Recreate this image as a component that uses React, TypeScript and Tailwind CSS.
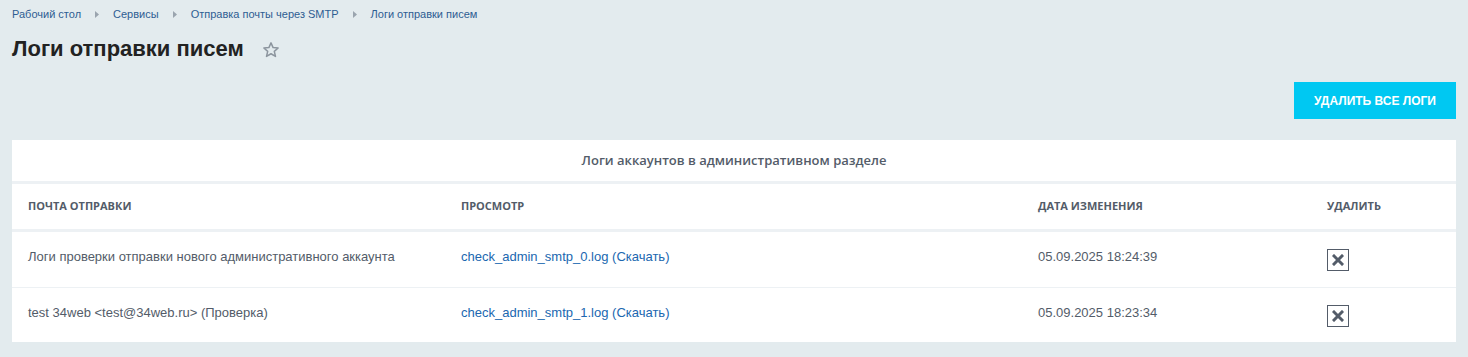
import React from "react";

type Row = {
  mail: string;
  file: string;
  date: string;
};

const rows: Row[] = [
  {
    mail: "Логи проверки отправки нового административного аккаунта",
    file: "check_admin_smtp_0.log",
    date: "05.09.2025 18:24:39",
  },
  {
    mail: "test 34web <test@34web.ru> (Проверка)",
    file: "check_admin_smtp_1.log",
    date: "05.09.2025 18:23:34",
  },
];

const crumbs = ["Рабочий стол", "Сервисы", "Отправка почты через SMTP", "Логи отправки писем"];

const cols = "grid grid-cols-[433px_577px_289px_1fr]";

function Arrow() {
  return (
    <svg width="4" height="7" viewBox="0 0 4 7" className="mx-[14px]">
      <path d="M0 0 L4 3.5 L0 7 Z" fill="#9aa4ae" />
    </svg>
  );
}

function DeleteBox() {
  return (
    <button
      type="button"
      className="mt-[2px] flex h-[22px] w-[22px] items-center justify-center border border-[#535c69] bg-white"
    >
      <svg width="12" height="12" viewBox="0 0 12 12">
        <path d="M2 2 L10 10 M10 2 L2 10" stroke="#535c69" strokeWidth="3" strokeLinecap="square" />
      </svg>
    </button>
  );
}

export default function App() {
  return (
    <div className="min-h-[357px] w-full bg-[#e3ebee] px-3 pb-4 font-['Liberation_Sans',Arial,sans-serif]">
      <div className="flex h-[29px] items-center text-[11px] text-[#2e5d92]">
        {crumbs.map((c, i) => (
          <React.Fragment key={c}>
            {i > 0 && <Arrow />}
            <a href="#" className="leading-none">
              {c}
            </a>
          </React.Fragment>
        ))}
      </div>

      <div className="flex h-[40px] items-center">
        <h1 className="text-[22px] font-bold leading-none text-[#222]">Логи отправки писем</h1>
        <svg width="18" height="18" viewBox="0 0 24 24" className="ml-[18px] mt-[2px]">
          <path
            d="M12 2.5 L14.8 8.8 L21.5 9.4 L16.4 13.9 L18 20.6 L12 17 L6 20.6 L7.6 13.9 L2.5 9.4 L9.2 8.8 Z"
            fill="none"
            stroke="#8c959e"
            strokeWidth="2"
            strokeLinejoin="round"
          />
        </svg>
      </div>

      <div className="mt-[13px] flex justify-end">
        <button
          type="button"
          className="h-[37px] w-[162px] bg-[#00c8f2] text-[12px] font-bold uppercase text-white"
        >
          Удалить все логи
        </button>
      </div>

      <div className="mt-[21px] bg-white">
        <div className="flex h-[44px] items-center justify-center border-b-[3px] border-[#edf1f4] font-['Open_Sans',sans-serif] text-[13px] font-semibold text-[#535c69]">
          Логи аккаунтов в административном разделе
        </div>
        <div
          className={`${cols} h-[48px] items-center border-b-[3px] border-[#edf1f4] font-['Open_Sans',sans-serif] text-[11px] font-bold uppercase text-[#535c69]`}
        >
          <div className="pl-4">Почта отправки</div>
          <div className="pl-4">Просмотр</div>
          <div className="pl-4">Дата изменения</div>
          <div className="pl-4">Удалить</div>
        </div>
        {rows.map((r, i) => (
          <div
            key={r.file}
            className={`${cols} items-start pt-[15px] text-[13px] text-[#535c69] ${
              i < rows.length - 1 ? "h-[56px] border-b border-[#edf1f4]" : "h-[54px]"
            }`}
          >
            <div className="pl-4">{r.mail}</div>
            <div className="pl-4 text-[#2067b0]">
              <a href="#">{r.file}</a> <a href="#">(Скачать)</a>
            </div>
            <div className="pl-4">{r.date}</div>
            <div className="pl-4">
              <DeleteBox />
            </div>
          </div>
        ))}
      </div>
    </div>
  );
}
